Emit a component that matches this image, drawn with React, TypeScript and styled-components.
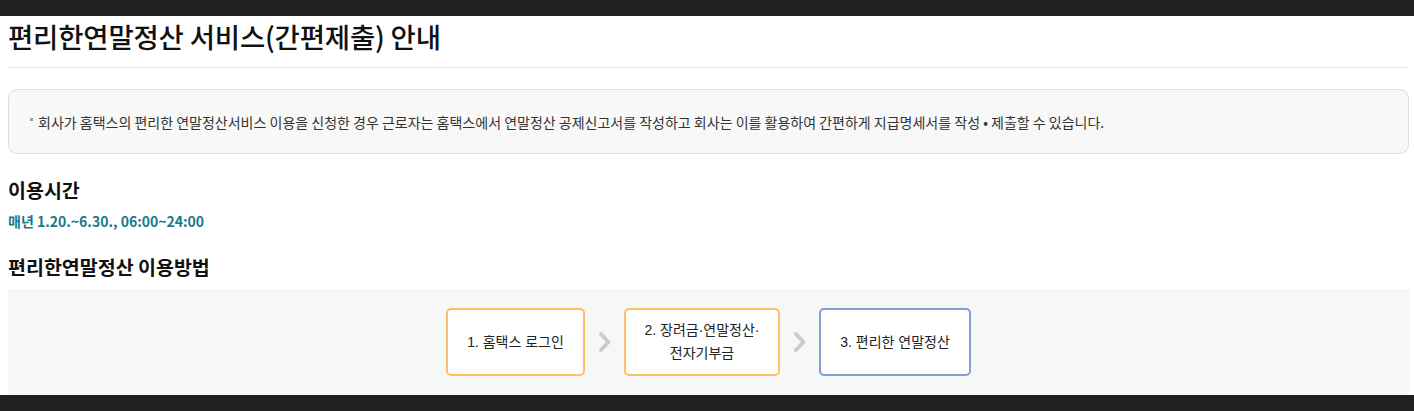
import React from 'react';
import styled, { createGlobalStyle } from 'styled-components';

// 편리한연말정산 안내 page

const GlobalStyle = createGlobalStyle`
  html, body {
    margin: 0;
    padding: 0;
    background: #ffffff;
  }
  body {
    font-family: "Noto Sans CJK KR", "Noto Sans", sans-serif;
    color: #111111;
  }
`;

const Page = styled.div`
  display: flex;
  flex-direction: column;
  height: 411px;
  overflow: hidden;
`;

const EdgeBar = styled.div`
  flex: 0 0 16px;
  background: #202020;
`;

const Content = styled.main`
  flex: 1;
  min-height: 0;
  overflow: hidden;
  padding: 0 5px 0 8px;
`;

const Title = styled.h1`
  margin: 2px 0 0;
  padding-bottom: 13px;
  border-bottom: 1px solid #e6e6e6;
  font-size: 27.5px;
  line-height: 36px;
  font-weight: 500;
  color: #111111;
  letter-spacing: -0.2px;
`;

const InfoBox = styled.div`
  margin-top: 21px;
  height: 65px;
  box-sizing: border-box;
  border: 1px solid #dddddd;
  border-radius: 9px;
  background: #f8f8f8;
  display: flex;
  align-items: center;
  padding: 0 21px;
`;

const Bullet = styled.span`
  width: 3px;
  height: 3px;
  background: #a0a0a0;
  margin: -5px 5px 0 0;
  flex: none;
`;

const InfoText = styled.p`
  margin: 0;
  font-size: 14px;
  line-height: 20px;
  color: #333333;
`;

const SectionTitle = styled.h2<{ $gap: number }>`
  margin: ${({ $gap }) => $gap}px 0 0;
  font-size: 19.5px;
  line-height: 26px;
  font-weight: 700;
  color: #111111;
`;

const Hours = styled.p`
  margin: 8px 0 0;
  font-size: 14px;
  line-height: 20px;
  font-weight: 700;
  color: #167a8b;
`;

const StepsPanel = styled.section`
  margin-top: 9px;
  background: #f6f8f8;
  padding: 19px 0 30px;
  display: flex;
  justify-content: center;
  align-items: center;
`;

const StepBox = styled.div<{ $tone: 'orange' | 'blue'; $width: number }>`
  width: ${({ $width }) => $width}px;
  height: 68px;
  flex: none;
  box-sizing: border-box;
  background: #ffffff;
  border: 2px solid ${({ $tone }) => ($tone === 'orange' ? '#fbc264' : '#7fa1d3')};
  border-radius: 5px;
  display: flex;
  align-items: center;
  justify-content: center;
  text-align: center;
  font-family: "Liberation Sans", "Noto Sans CJK KR", sans-serif;
  font-size: 14px;
  line-height: 23px;
  color: #222222;
`;

const ArrowSlot = styled.div`
  width: 39px;
  display: flex;
  justify-content: center;
  align-items: center;
`;

const Chevron = () => (
  <svg width="14" height="22" viewBox="0 0 14 22" fill="none">
    <path
      d="M3 3 L10.5 11 L3 19"
      stroke="#cbcbcb"
      strokeWidth="4"
      strokeLinecap="round"
      strokeLinejoin="round"
    />
  </svg>
);

const steps: { label: React.ReactNode; tone: 'orange' | 'blue'; width: number }[] = [
  { label: '1. 홈택스 로그인', tone: 'orange', width: 139 },
  {
    label: (
      <>
        2. 장려금·연말정산·
        <br />
        전자기부금
      </>
    ),
    tone: 'orange',
    width: 156,
  },
  { label: '3. 편리한 연말정산', tone: 'blue', width: 152 },
];

export default function App() {
  return (
    <>
      <GlobalStyle />
      <Page>
        <EdgeBar />
        <Content>
          <Title>편리한연말정산 서비스(간편제출) 안내</Title>

          <InfoBox>
            <Bullet />
            <InfoText>
              회사가 홈택스의 편리한 연말정산서비스 이용을 신청한 경우 근로자는 홈택스에서 연말정산
              공제신고서를 작성하고 회사는 이를 활용하여 간편하게 지급명세서를 작성 • 제출할 수
              있습니다.
            </InfoText>
          </InfoBox>

          <SectionTitle $gap={23}>이용시간</SectionTitle>
          <Hours>매년 1.20.~6.30., 06:00~24:00</Hours>

          <SectionTitle $gap={23}>편리한연말정산 이용방법</SectionTitle>
          <StepsPanel>
            {steps.map((step, i) => (
              <React.Fragment key={i}>
                {i > 0 && (
                  <ArrowSlot>
                    <Chevron />
                  </ArrowSlot>
                )}
                <StepBox $tone={step.tone} $width={step.width}>
                  <span>{step.label}</span>
                </StepBox>
              </React.Fragment>
            ))}
          </StepsPanel>
        </Content>
        <EdgeBar />
      </Page>
    </>
  );
}
